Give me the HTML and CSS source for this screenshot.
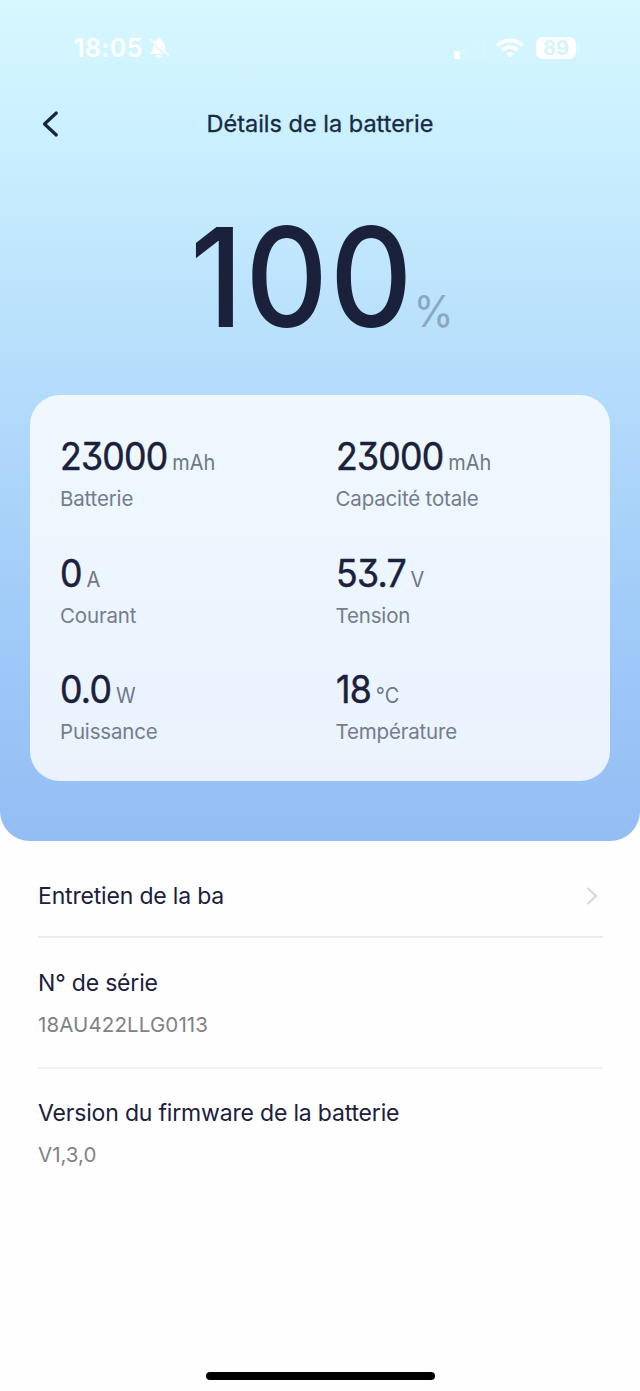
FILE: index.html
```html
<!DOCTYPE html>
<html lang="fr">
<head>
<meta charset="utf-8">
<title>Détails de la batterie</title>
<link rel="stylesheet" href="styles.css">
</head>
<body>
<main class="screen">
  <section class="hero">
    <div class="status">
      <div class="clock">
        <span class="time">18:05</span>
        <svg class="bell" width="22" height="23" viewBox="0 0 22 22">
          <path d="M2 17.300c2-1.800 3-3.300 3-7.300 0-3.500 1.700-5.700 4-6.400C9.200 2 10 1 11 1s1.800 1 2 2.600c2.300.7 4 2.900 4 6.400 0 4 1 5.500 3 7.300zM8 18.500h6c-.3 1.800-1.400 2.700-3 2.700s-2.700-.9-3-2.700z" fill="#fff"/>
          <path d="M2 4.200l17 15.500" stroke="#d3f5fd" stroke-width="1.300"/>
          <path d="M2.700 2.700l17.500 16" stroke="#fff" stroke-width="1.500" stroke-linecap="round"/>
        </svg>
      </div>
      <div class="indicators">
        <svg class="signal" width="36" height="24" viewBox="0 0 36 24" fill="#fff">
          <rect x="1" y="15" width="6" height="8" rx="1.500"/>
          <g opacity=".1"><rect x="10" y="12" width="6" height="11" rx="1.500"/><rect x="19" y="7" width="6" height="16" rx="1.500"/><rect x="28" y="2" width="6" height="21" rx="1.500"/></g>
        </svg>
        <svg class="wifi" width="28" height="20" viewBox="0 0 28 20" fill="none" stroke="#fff" stroke-width="3.800">
          <path d="M1.500 7.500a18 18 0 0 1 25 0"/>
          <path d="M6.200 12.200a11.200 11.200 0 0 1 15.600 0"/>
          <path d="M14 19.500l-4-4a5.800 5.800 0 0 1 8 0z" fill="#fff" stroke="none"/>
        </svg>
        <span class="charge">89</span>
        <span class="cap"></span>
      </div>
    </div>
    <header class="nav">
      <svg class="back" width="20" height="28" viewBox="0 0 20 28" fill="none" stroke="#172740" stroke-width="3.200" stroke-linecap="round" stroke-linejoin="round"><path d="M16.300 3L4.500 14l11.800 11"/></svg>
      <h1 class="title">Détails de la batterie</h1>
    </header>
    <div class="level"><span class="level-value">100</span><span class="level-unit">%</span></div>
    <div class="card">
      <div class="stat"><div class="reading"><span class="value">23000</span><span class="unit">mAh</span></div><div class="label">Batterie</div></div>
      <div class="stat"><div class="reading"><span class="value">23000</span><span class="unit">mAh</span></div><div class="label">Capacité totale</div></div>
      <div class="stat"><div class="reading"><span class="value">0</span><span class="unit">A</span></div><div class="label">Courant</div></div>
      <div class="stat"><div class="reading"><span class="value">53.7</span><span class="unit">V</span></div><div class="label">Tension</div></div>
      <div class="stat"><div class="reading"><span class="value">0.0</span><span class="unit">W</span></div><div class="label">Puissance</div></div>
      <div class="stat"><div class="reading"><span class="value">18</span><span class="unit">°C</span></div><div class="label">Température</div></div>
    </div>
  </section>
  <section class="list">
    <div class="row row-link">
      <span class="row-title">Entretien de la ba</span>
      <svg class="chevron" width="14" height="20" viewBox="0 0 14 20" fill="none" stroke="#d8d8da" stroke-width="2.400"><path d="M2.500 2l8.500 8-8.500 8"/></svg>
    </div>
    <div class="row row-serial">
      <div class="row-title">N° de série</div>
      <div class="row-detail serial">18AU422LLG0113</div>
    </div>
    <div class="row row-version">
      <div class="row-title firmware">Version du firmware de la batterie</div>
      <div class="row-detail">V1,3,0</div>
    </div>
  </section>
  <div class="home"></div>
</main>
</body>
</html>
```
FILE: styles.css
```css
* { box-sizing: border-box; }
body { margin: 0; background: #fff; font-family: Inter, "Liberation Sans", sans-serif; color: #1b203b; }
.screen { display: flex; flex-direction: column; width: 640px; height: 1391px; background: #fefefe; overflow: hidden; }
.hero { height: 841px; border-radius: 0 0 30px 30px; background: linear-gradient(#d6f8fe 0%, #caefff 17%, #b4dcfb 46%, #a0caf8 75%, #94bdf4 100%); }
.status { display: flex; justify-content: space-between; height: 94px; padding: 34px 61px 0 74px; }
.clock { display: flex; align-items: center; height: 27px; gap: 5px; color: #fff; }
.time { font-size: 25px; font-weight: 600; letter-spacing: .4px; }
.indicators { display: flex; align-items: center; height: 27px; }
.wifi { margin: 0 12px 0 7px; }
.charge { width: 40px; height: 22px; border-radius: 7px; background: #fff; color: #d5f4fb; font-size: 20px; line-height: 22px; font-weight: 700; text-align: center; }
.cap { width: 2px; height: 8px; margin-left: 1px; border-radius: 0 2px 2px 0; background: rgba(255,255,255,.35); }
.nav { display: grid; grid-template-columns: 60px 1fr 60px; align-items: center; height: 60px; padding: 0 40px; }
.title { margin: 0; text-align: center; font-size: 23.500px; line-height: 30px; font-weight: 400; -webkit-text-stroke: .3px #182b43; color: #182b43; white-space: nowrap; }
.level { display: flex; align-items: baseline; height: 241px; margin-left: 190px; padding-top: 51px; line-height: 144px; transform: scaleX(.93); transform-origin: left; }
.level-value { font-size: 138px; font-weight: 500; letter-spacing: 2px; }
.level-unit { margin-left: -1px; font-size: 44px; color: #8ba8c1; }
.card { display: grid; grid-template-columns: 275.500px 1fr; grid-auto-rows: 116.500px; width: 580px; height: 386px; margin-left: 30px; padding: 40px 30px 0; border-radius: 30px; background: rgba(255,255,255,.8); }
.reading { display: flex; align-items: baseline; height: 44px; line-height: 44px; transform: scaleX(.95); transform-origin: left; }
.value { font-size: 37.500px; font-weight: 400; -webkit-text-stroke: .5px #1b203b; letter-spacing: -.8px; font-feature-settings: "cv09"; }
.unit { margin-left: 5px; font-size: 21px; color: #707785; }
.label { margin-top: 7px; font-size: 20.500px; line-height: 26px; letter-spacing: -.17px; color: #757c8b; }
.list { padding: 0 37px 0 38px; }
.row-link { display: flex; justify-content: space-between; align-items: center; height: 97px; padding: 14px 4px 0 0; border-bottom: 2px solid #ececed; }
.row-serial { height: 131px; padding-top: 30px; border-bottom: 2px solid #f0f0f1; }
.row-version { padding-top: 29px; }
.row-title { font-size: 23px; line-height: 30px; letter-spacing: -.18px; }
.row-detail { margin-top: 14px; font-size: 20.500px; line-height: 26px; color: #808187; }
.serial { letter-spacing: .12px; }
.home { width: 229px; height: 8px; margin: auto auto 11px; border-radius: 4px; background: #000; }
```
